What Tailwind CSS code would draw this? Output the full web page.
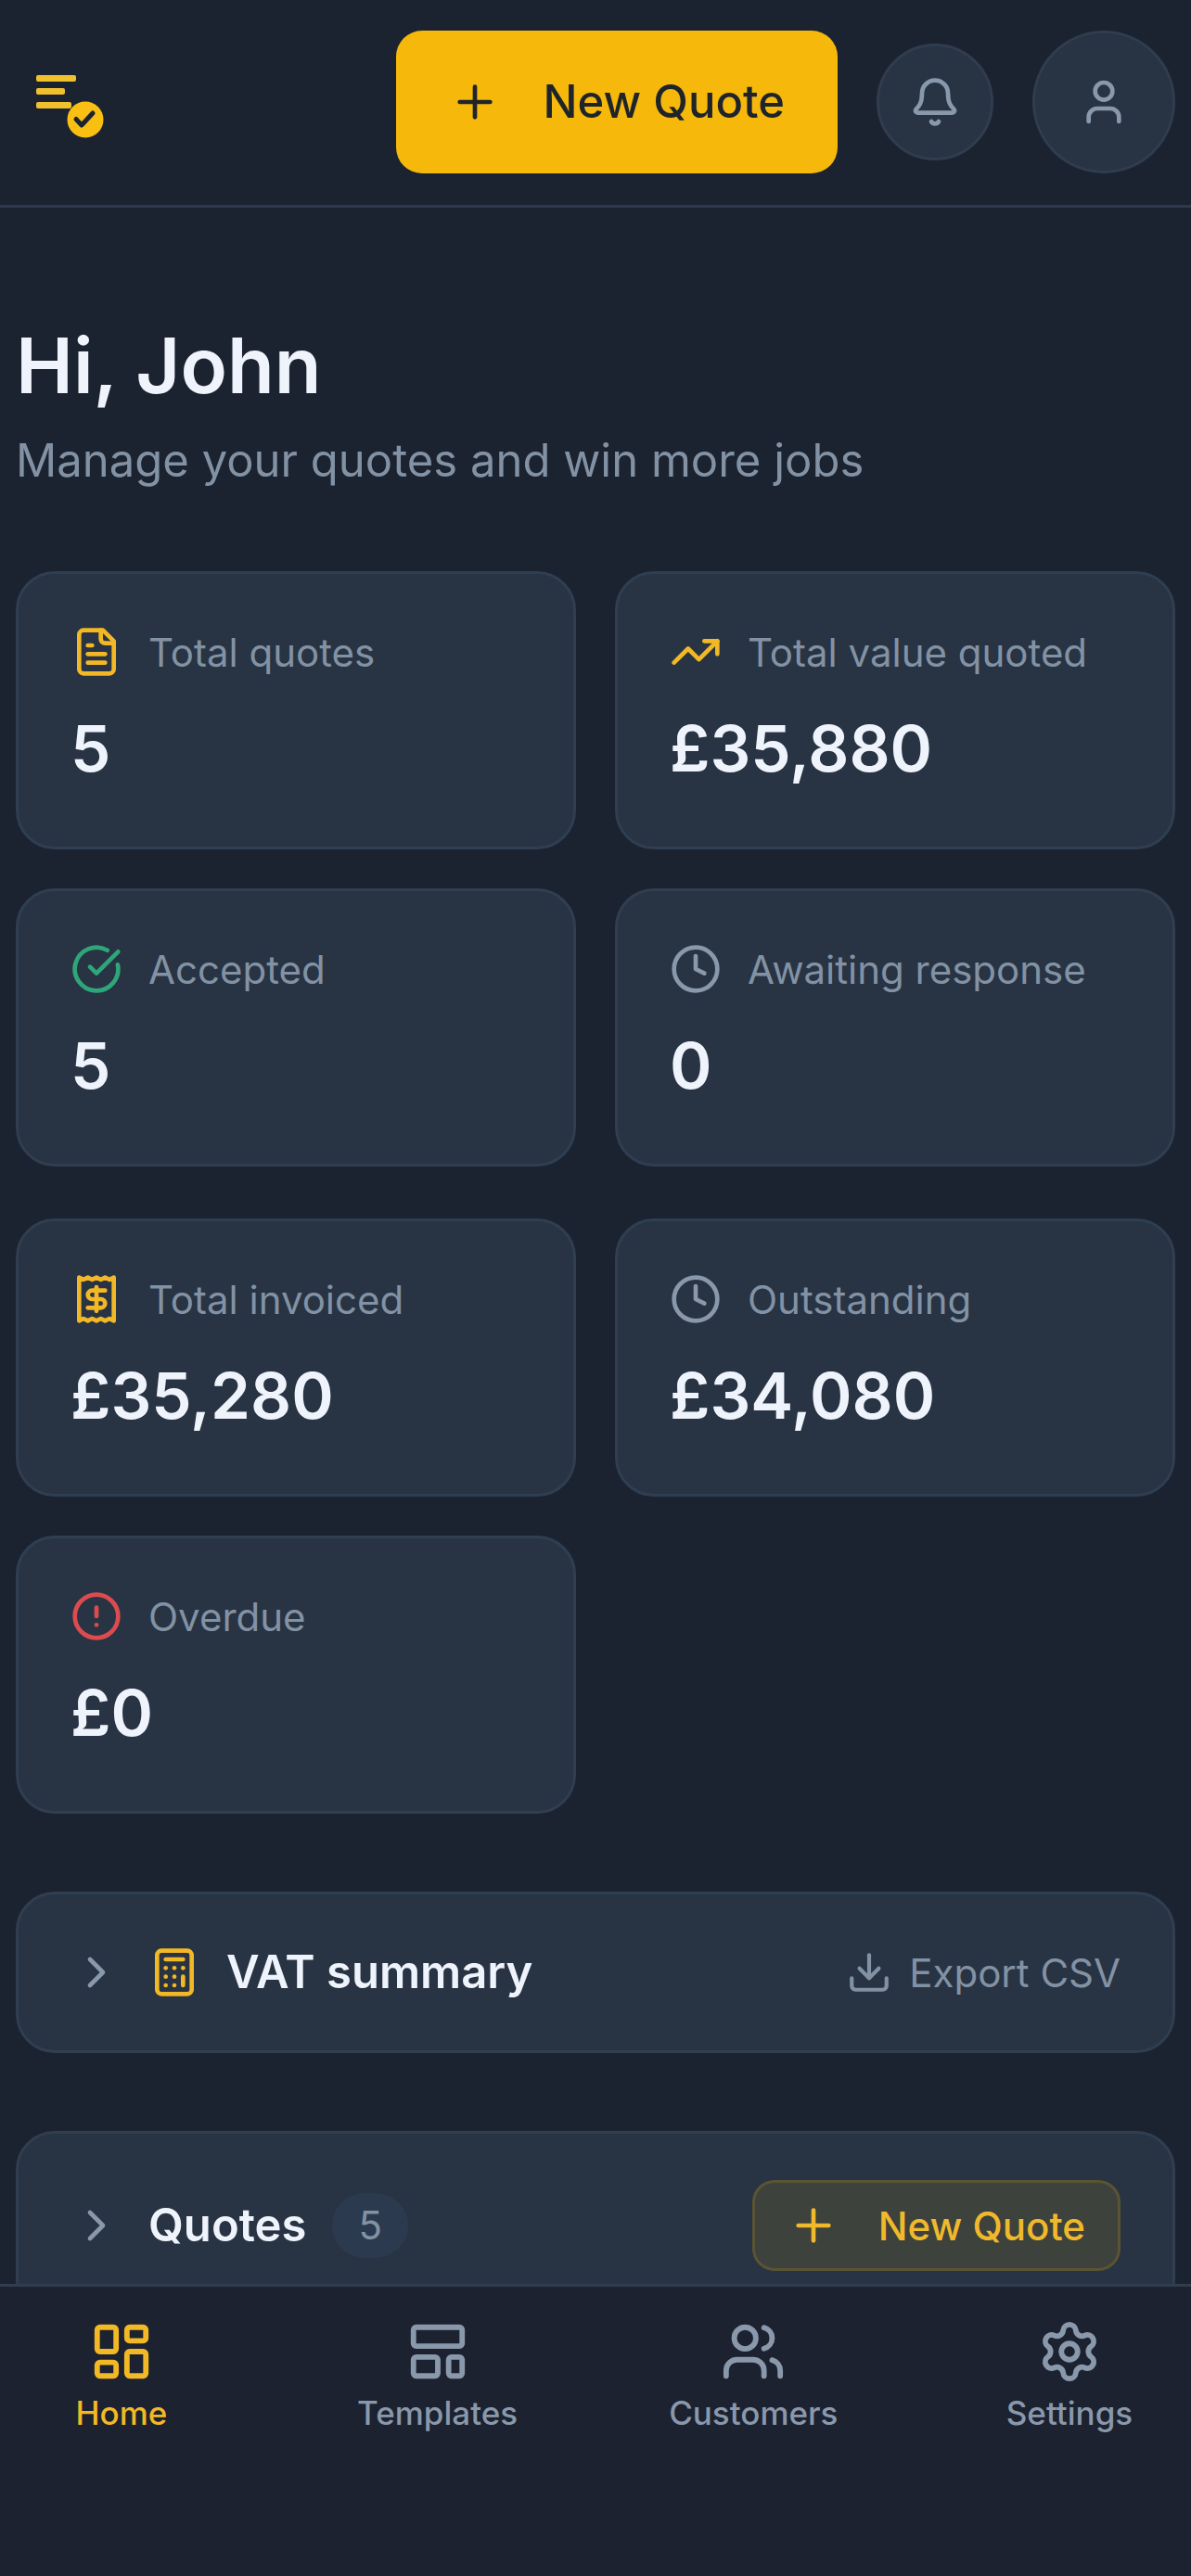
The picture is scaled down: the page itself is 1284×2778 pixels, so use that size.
<!DOCTYPE html>
<html lang="en">
<head>
  <meta charset="UTF-8" />
  <meta name="viewport" content="width=device-width, initial-scale=1.0" />
  <title>Quotes Dashboard</title>
  <script src="https://cdn.jsdelivr.net/npm/@tailwindcss/browser@4"></script>
</head>
<body class="bg-[#1c2330] text-[#eff3fb] min-h-screen font-['Inter','Liberation_Sans',sans-serif]">
  <header class="flex items-center justify-between border-b-3 border-[#2d3a4d] px-[17px] pt-[33px] pb-[34px]">
    <a href="#" aria-label="Dashboard">
      <svg class="size-24" viewBox="0 0 96 96" fill="none">
        <g fill="#f0c02d">
          <rect x="22" y="19" width="43" height="7" rx="2" />
          <rect x="22" y="33" width="31" height="7" rx="2" />
          <rect x="22" y="48" width="38" height="7" rx="2" />
        </g>
        <circle cx="75" cy="67" r="19.500" fill="#f9c013" />
        <path d="M65 66.500l6 6.500 12-13" stroke="#1c2330" stroke-width="5" stroke-linecap="round" stroke-linejoin="round" />
      </svg>
    </a>
    <div class="flex items-center gap-[42px]">
      <button class="flex items-center gap-[46px] h-[154px] px-[57px] rounded-[28px] bg-[#f5b80b] text-[#1f242a] text-[49px] font-medium">
        <svg class="size-14" viewBox="0 0 24 24" fill="none" stroke="currentColor" stroke-width="2" stroke-linecap="round" stroke-linejoin="round"><path d="M5 12h14" /><path d="M12 5v14" /></svg>
        New Quote
      </button>
      <button class="flex items-center justify-center size-[126px] rounded-full border-3 border-[#2f3d4f] bg-[#283443] text-[#8a98ab]" aria-label="Notifications">
        <svg class="size-14" viewBox="0 0 24 24" fill="none" stroke="currentColor" stroke-width="2" stroke-linecap="round" stroke-linejoin="round"><path d="M10.268 21a2 2 0 0 0 3.464 0" /><path d="M3.262 15.326A1 1 0 0 0 4 17h16a1 1 0 0 0 .74-1.673C19.410 13.956 18 12.499 18 8A6 6 0 0 0 6 8c0 4.499-1.411 5.956-2.738 7.326" /></svg>
      </button>
      <button class="flex items-center justify-center size-[154px] rounded-full border-3 border-[#2f3d4f] bg-[#283443] text-[#8a98ab]" aria-label="Account">
        <svg class="size-14" viewBox="0 0 24 24" fill="none" stroke="currentColor" stroke-width="2" stroke-linecap="round" stroke-linejoin="round"><path d="M19 21v-2a4 4 0 0 0-4-4H9a4 4 0 0 0-4 4v2" /><circle cx="12" cy="7" r="4" /></svg>
      </button>
    </div>
  </header>

  <main class="px-[17px] pt-[120px] pb-[276px]">
    <h1 class="text-[83px] leading-[100px] font-semibold">Hi, John</h1>
    <p class="mt-[18px] text-[49px] leading-[70px] text-[#8292a4]">Manage your quotes and win more jobs</p>

    <!-- Quote stats -->
    <section class="mt-[84px] grid grid-cols-2 gap-[42px]">
      <div class="rounded-[42px] border-3 border-[#2f3e51] bg-[#283443] p-14">
        <div class="flex items-center gap-7 h-14 text-[42px] text-[#8292a4]">
          <svg class="size-14 text-[#f2b825]" viewBox="0 0 24 24" fill="none" stroke="currentColor" stroke-width="2" stroke-linecap="round" stroke-linejoin="round"><path d="M15 2H6a2 2 0 0 0-2 2v16a2 2 0 0 0 2 2h12a2 2 0 0 0 2-2V7Z" /><path d="M14 2v4a2 2 0 0 0 2 2h4" /><path d="M10 9H8" /><path d="M16 13H8" /><path d="M16 17H8" /></svg>
          <h2>Total quotes</h2>
        </div>
        <p class="mt-[26px] text-[69px] leading-[100px] font-semibold">5</p>
      </div>
      <div class="rounded-[42px] border-3 border-[#2f3e51] bg-[#283443] p-14">
        <div class="flex items-center gap-7 h-14 text-[42px] text-[#8292a4]">
          <svg class="size-14 text-[#f2b825]" viewBox="0 0 24 24" fill="none" stroke="currentColor" stroke-width="2" stroke-linecap="round" stroke-linejoin="round"><path d="M22 7l-8.500 8.500-5-5L2 17" /><path d="M16 7h6v6" /></svg>
          <h2>Total value quoted</h2>
        </div>
        <p class="mt-[26px] text-[69px] leading-[100px] font-semibold">£35,880</p>
      </div>
      <div class="rounded-[42px] border-3 border-[#2f3e51] bg-[#283443] p-14">
        <div class="flex items-center gap-7 h-14 text-[42px] text-[#8292a4]">
          <svg class="size-14 text-[#2fa67a]" viewBox="0 0 24 24" fill="none" stroke="currentColor" stroke-width="2" stroke-linecap="round" stroke-linejoin="round"><path d="M21.801 10A10 10 0 1 1 17 3.335" /><path d="m9 11 3 3L22 4" /></svg>
          <h2>Accepted</h2>
        </div>
        <p class="mt-[26px] text-[69px] leading-[100px] font-semibold">5</p>
      </div>
      <div class="rounded-[42px] border-3 border-[#2f3e51] bg-[#283443] p-14">
        <div class="flex items-center gap-7 h-14 text-[42px] text-[#8292a4]">
          <svg class="size-14 text-[#8a98ab]" viewBox="0 0 24 24" fill="none" stroke="currentColor" stroke-width="2" stroke-linecap="round" stroke-linejoin="round"><circle cx="12" cy="12" r="10" /><path d="M12 6v6l4 2" /></svg>
          <h2>Awaiting response</h2>
        </div>
        <p class="mt-[26px] text-[69px] leading-[100px] font-semibold">0</p>
      </div>
    </section>

    <!-- Invoice stats -->
    <section class="mt-14 grid grid-cols-2 gap-[42px]">
      <div class="rounded-[42px] border-3 border-[#2f3e51] bg-[#283443] p-14">
        <div class="flex items-center gap-7 h-14 text-[42px] text-[#8292a4]">
          <svg class="size-14 text-[#f2b825]" viewBox="0 0 24 24" fill="none" stroke="currentColor" stroke-width="2" stroke-linecap="round" stroke-linejoin="round"><path d="M4 2v20l2-1 2 1 2-1 2 1 2-1 2 1 2-1 2 1V2l-2 1-2-1-2 1-2-1-2 1-2-1-2 1Z" /><path d="M16 8h-6a2 2 0 1 0 0 4h4a2 2 0 1 1 0 4H8" /><path d="M12 17.500v-11" /></svg>
          <h2>Total invoiced</h2>
        </div>
        <p class="mt-[26px] text-[69px] leading-[100px] font-semibold">£35,280</p>
      </div>
      <div class="rounded-[42px] border-3 border-[#2f3e51] bg-[#283443] p-14">
        <div class="flex items-center gap-7 h-14 text-[42px] text-[#8292a4]">
          <svg class="size-14 text-[#8a98ab]" viewBox="0 0 24 24" fill="none" stroke="currentColor" stroke-width="2" stroke-linecap="round" stroke-linejoin="round"><circle cx="12" cy="12" r="10" /><path d="M12 6v6l4 2" /></svg>
          <h2>Outstanding</h2>
        </div>
        <p class="mt-[26px] text-[69px] leading-[100px] font-semibold">£34,080</p>
      </div>
      <div class="rounded-[42px] border-3 border-[#2f3e51] bg-[#283443] p-14">
        <div class="flex items-center gap-7 h-14 text-[42px] text-[#8292a4]">
          <svg class="size-14 text-[#dc4c4f]" viewBox="0 0 24 24" fill="none" stroke="currentColor" stroke-width="2" stroke-linecap="round" stroke-linejoin="round"><circle cx="12" cy="12" r="10" /><path d="M12 8v4" /><path d="M12 16h.01" /></svg>
          <h2>Overdue</h2>
        </div>
        <p class="mt-[26px] text-[69px] leading-[100px] font-semibold">£0</p>
      </div>
    </section>

    <!-- VAT summary -->
    <section class="mt-[84px] flex items-center justify-between rounded-[42px] border-3 border-[#2f3e51] bg-[#283443] px-14 py-[49px]">
      <button class="flex items-center gap-7 h-[70px] text-[49px] font-semibold" aria-expanded="false">
        <svg class="size-14 text-[#8a98ab]" viewBox="0 0 24 24" fill="none" stroke="currentColor" stroke-width="2" stroke-linecap="round" stroke-linejoin="round"><path d="m9 18 6-6-6-6" /></svg>
        <svg class="size-14 text-[#f2b825]" viewBox="0 0 24 24" fill="none" stroke="currentColor" stroke-width="2" stroke-linecap="round" stroke-linejoin="round"><rect width="16" height="20" x="4" y="2" rx="2" /><path d="M8 6h8" /><path d="M16 14v4" /><path d="M16 10h.01" /><path d="M12 10h.01" /><path d="M8 10h.01" /><path d="M12 14h.01" /><path d="M8 14h.01" /><path d="M12 18h.01" /><path d="M8 18h.01" /></svg>
        VAT summary
      </button>
      <button class="flex items-center gap-[18px] text-[42px] text-[#8292a4]">
        <svg class="size-[50px]" viewBox="0 0 24 24" fill="none" stroke="currentColor" stroke-width="2" stroke-linecap="round" stroke-linejoin="round"><path d="M12 15V3" /><path d="M21 15v4a2 2 0 0 1-2 2H5a2 2 0 0 1-2-2v-4" /><path d="m7 10 5 5 5-5" /></svg>
        Export CSV
      </button>
    </section>

    <!-- Quotes -->
    <section class="mt-[84px] flex items-center justify-between rounded-[42px] border-3 border-[#2f3e51] bg-[#283443] px-14 py-[50px]">
      <button class="flex items-center gap-7 text-[49px] font-semibold" aria-expanded="false">
        <svg class="size-14 text-[#8a98ab]" viewBox="0 0 24 24" fill="none" stroke="currentColor" stroke-width="2" stroke-linecap="round" stroke-linejoin="round"><path d="m9 18 6-6-6-6" /></svg>
        Quotes
        <span class="rounded-full bg-[#2c3a4f] px-7 text-[42px] leading-[70px] font-normal text-[#8292a4]">5</span>
      </button>
      <button class="flex items-center gap-[42px] h-[98px] px-[35px] rounded-[24px] border-3 border-[#5a5433] bg-[#3d423c] text-[#f0b92b] text-[42px] font-medium">
        <svg class="size-14" viewBox="0 0 24 24" fill="none" stroke="currentColor" stroke-width="2" stroke-linecap="round" stroke-linejoin="round"><path d="M5 12h14" /><path d="M12 5v14" /></svg>
        New Quote
      </button>
    </section>
  </main>

  <nav class="fixed inset-x-0 bottom-0 flex justify-between border-t-3 border-[#303d4e] bg-[#1c2230] px-[17px] pt-[35px] pb-[152px] text-[35px] leading-[48px] font-medium text-[#8a98ab]">
    <a href="#" class="flex flex-col items-center gap-[7px] w-[228px] text-[#f2b825]" aria-current="page">
      <svg class="size-[70px]" viewBox="0 0 24 24" fill="none" stroke="currentColor" stroke-width="2" stroke-linecap="round" stroke-linejoin="round"><rect width="7" height="9" x="3" y="3" rx="1" /><rect width="7" height="5" x="14" y="3" rx="1" /><rect width="7" height="9" x="14" y="12" rx="1" /><rect width="7" height="5" x="3" y="16" rx="1" /></svg>
      Home
    </a>
    <a href="#" class="flex flex-col items-center gap-[7px] w-[228px]">
      <svg class="size-[70px]" viewBox="0 0 24 24" fill="none" stroke="currentColor" stroke-width="2" stroke-linecap="round" stroke-linejoin="round"><rect width="18" height="7" x="3" y="3" rx="1" /><rect width="9" height="7" x="3" y="14" rx="1" /><rect width="5" height="7" x="16" y="14" rx="1" /></svg>
      Templates
    </a>
    <a href="#" class="flex flex-col items-center gap-[7px] w-[228px]">
      <svg class="size-[70px]" viewBox="0 0 24 24" fill="none" stroke="currentColor" stroke-width="2" stroke-linecap="round" stroke-linejoin="round"><path d="M16 21v-2a4 4 0 0 0-4-4H6a4 4 0 0 0-4 4v2" /><path d="M16 3.128a4 4 0 0 1 0 7.744" /><path d="M22 21v-2a4 4 0 0 0-3-3.870" /><circle cx="9" cy="7" r="4" /></svg>
      Customers
    </a>
    <a href="#" class="flex flex-col items-center gap-[7px] w-[228px]">
      <svg class="size-[70px]" viewBox="0 0 24 24" fill="none" stroke="currentColor" stroke-width="2" stroke-linecap="round" stroke-linejoin="round"><path d="M9.671 4.136a2.340 2.340 0 0 1 4.659 0 2.340 2.340 0 0 0 3.319 1.915 2.340 2.340 0 0 1 2.330 4.033 2.340 2.340 0 0 0 0 3.831 2.340 2.340 0 0 1-2.330 4.033 2.340 2.340 0 0 0-3.319 1.915 2.340 2.340 0 0 1-4.659 0 2.340 2.340 0 0 0-3.320-1.915 2.340 2.340 0 0 1-2.330-4.033 2.340 2.340 0 0 0 0-3.831A2.340 2.340 0 0 1 6.350 6.051a2.340 2.340 0 0 0 3.319-1.915" /><circle cx="12" cy="12" r="3" /></svg>
      Settings
    </a>
  </nav>
</body>
</html>
